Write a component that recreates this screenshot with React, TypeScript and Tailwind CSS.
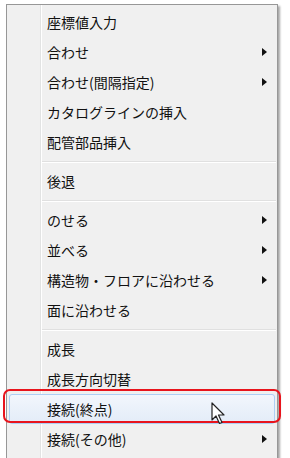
import React from 'react';

type Item =
  | { kind: 'item'; label: string; sub?: boolean; active?: boolean }
  | { kind: 'sep' };

const items: Item[] = [
  { kind: 'item', label: '座標値入力' },
  { kind: 'item', label: '合わせ', sub: true },
  { kind: 'item', label: '合わせ(間隔指定)', sub: true },
  { kind: 'item', label: 'カタログラインの挿入' },
  { kind: 'item', label: '配管部品挿入' },
  { kind: 'sep' },
  { kind: 'item', label: '後退' },
  { kind: 'sep' },
  { kind: 'item', label: 'のせる', sub: true },
  { kind: 'item', label: '並べる', sub: true },
  { kind: 'item', label: '構造物・フロアに沿わせる', sub: true },
  { kind: 'item', label: '面に沿わせる' },
  { kind: 'sep' },
  { kind: 'item', label: '成長' },
  { kind: 'item', label: '成長方向切替' },
  { kind: 'item', label: '接続(終点)', active: true },
  { kind: 'item', label: '接続(その他)', sub: true },
  { kind: 'item', label: '' },
];

function Arrow() {
  return (
    <svg width="5" height="8" viewBox="0 0 5 8" className="block">
      <path d="M0 0 L5 4 L0 8 Z" fill="#111" />
    </svg>
  );
}

function Cursor() {
  return (
    <svg width="16" height="24" viewBox="0 0 16 24">
      <path
        d="M1 1 L1 18 L5 14 L8.5 21.5 L11 20.5 L7.5 13 L13 13 Z"
        fill="#fff"
        stroke="#222"
        strokeWidth="1.2"
        strokeLinejoin="round"
      />
    </svg>
  );
}

export default function App() {
  return (
    <div
      className="relative w-[290px] h-[458px] overflow-hidden bg-white pt-[4px] pl-[6px]"
      style={{ fontFamily: '"Noto Sans CJK JP", "Noto Sans", sans-serif' }}
    >
      <div className="relative w-[272px] border border-[#979797] bg-[#f0f0f0] pt-[2px] shadow-[2px_2px_2px_rgba(0,0,0,0.35)]">
        {/* gutter line */}
        <div className="absolute top-0 bottom-0 left-[33px] w-[2px] border-l border-[#e2e3e3] bg-white" />

        {items.map((it, i) =>
          it.kind === 'sep' ? (
            <div key={i} className="relative h-[9px] flex items-center pl-[35px] pr-[1px]">
              <div className="w-full h-[2px] border-t border-[#e0e0e0] bg-white" />
            </div>
          ) : it.active ? (
            <div
              key={i}
              className="relative z-10 h-[30px] mx-[2px] flex items-center pl-[37px] pr-[8px] text-[14px] text-[#111] rounded-[3px] border border-[#aecff5] bg-gradient-to-b from-[#f2f6fc] to-[#e3ecf8]"
            >
              <span className="flex-1 leading-none">{it.label}</span>
            </div>
          ) : (
            <div
              key={i}
              className="relative h-[30px] flex items-center pl-[40px] pr-[10px] text-[14px] text-[#111]"
            >
              <span className="flex-1 leading-none">{it.label}</span>
              {it.sub && <Arrow />}
            </div>
          )
        )}
      </div>

      {/* red annotation */}
      <div className="absolute left-[3px] top-[389px] w-[278px] h-[34px] rounded-[7px] border-2 border-[#e8141c] z-20" />

      {/* mouse pointer */}
      <div className="absolute left-[211px] top-[402px] z-30">
        <Cursor />
      </div>
    </div>
  );
}
